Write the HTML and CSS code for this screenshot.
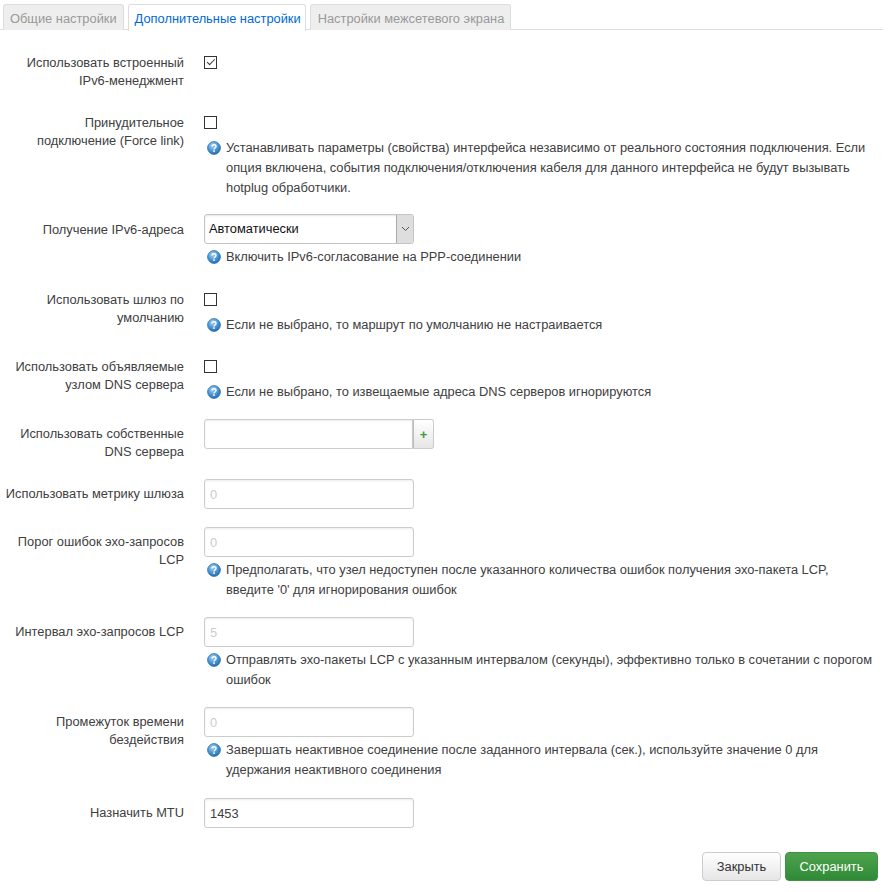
FILE: index.html
```html
<!DOCTYPE html>
<html lang="ru">
<head>
    <meta charset="UTF-8">
    <meta name="viewport" content="width=device-width, initial-scale=1.0">
    <title>Дополнительные настройки</title>
    <link rel="stylesheet" href="styles.css">
</head>
<body>

    <ul class="tabs">
        <li class="tab">Общие настройки</li>
        <li class="tab active">Дополнительные настройки</li>
        <li class="tab wide">Настройки межсетевого экрана</li>
    </ul>

    <svg width="0" height="0" class="defs">
        <defs>
            <radialGradient id="help-fill" cx="40%" cy="30%" r="75%">
                <stop offset="0" stop-color="#a9d4f2"/>
                <stop offset="0.55" stop-color="#4a96d6"/>
                <stop offset="1" stop-color="#1f69ad"/>
            </radialGradient>
            <symbol id="help" viewBox="0 0 14 14">
                <circle cx="7" cy="7" r="6.4" fill="url(#help-fill)" stroke="#2a6ea8" stroke-width="0.8"/>
                <path d="M5 5.6C5 4.4 5.9 3.8 7 3.8s2 .7 2 1.7c0 1.5-2 1.5-2 3" fill="none" stroke="#fff" stroke-width="1.4"/>
                <rect x="6.2" y="9.3" width="1.6" height="1.6" fill="#fff"/>
            </symbol>
        </defs>
    </svg>

    <div class="form">
        <div class="row">
            <label class="title low">Использовать встроенный IPv6-менеджмент</label>
            <div class="field">
                <div class="check-line"><span class="check checked"></span></div>
            </div>
        </div>

        <div class="row tight">
            <label class="title low">Принудительное подключение (Force link)</label>
            <div class="field">
                <div class="check-line"><span class="check"></span></div>
                <div class="help flush"><svg class="help-icon"><use href="#help"/></svg><span>Устанавливать параметры (свойства) интерфейса независимо от реального состояния подключения. Если опция включена, события подключения/отключения кабеля для данного интерфейса не будут вызывать hotplug обработчики.</span></div>
            </div>
        </div>

        <div class="row">
            <label class="title low">Получение IPv6-адреса</label>
            <div class="field">
                <div class="select">
                    <span class="select-value">Автоматически</span>
                    <span class="select-arrow"><svg width="9" height="6" viewBox="0 0 9 6"><path d="M1 1l3.5 3.5L8 1" fill="none" stroke="#555" stroke-width="1"/></svg></span>
                </div>
                <div class="help"><svg class="help-icon"><use href="#help"/></svg><span>Включить IPv6-согласование на PPP-соединении</span></div>
            </div>
        </div>

        <div class="row tight">
            <label class="title low">Использовать шлюз по умолчанию</label>
            <div class="field">
                <div class="check-line"><span class="check"></span></div>
                <div class="help flush"><svg class="help-icon"><use href="#help"/></svg><span>Если не выбрано, то маршрут по умолчанию не настраивается</span></div>
            </div>
        </div>

        <div class="row">
            <label class="title low">Использовать объявляемые узлом DNS сервера</label>
            <div class="field">
                <div class="check-line"><span class="check"></span></div>
                <div class="help flush"><svg class="help-icon"><use href="#help"/></svg><span>Если не выбрано, то извещаемые адреса DNS серверов игнорируются</span></div>
            </div>
        </div>

        <div class="row">
            <label class="title">Использовать собственные DNS сервера</label>
            <div class="field">
                <div class="input-group">
                    <input class="input joined" type="text">
                    <button class="add" type="button">+</button>
                </div>
            </div>
        </div>

        <div class="row">
            <label class="title">Использовать метрику шлюза</label>
            <div class="field">
                <input class="input" type="text" placeholder="0">
            </div>
        </div>

        <div class="row">
            <label class="title">Порог ошибок эхо-запросов LCP</label>
            <div class="field">
                <input class="input" type="text" placeholder="0">
                <div class="help"><svg class="help-icon"><use href="#help"/></svg><span>Предполагать, что узел недоступен после указанного количества ошибок получения эхо-пакета LCP, введите '0' для игнорирования ошибок</span></div>
            </div>
        </div>

        <div class="row">
            <label class="title">Интервал эхо-запросов LCP</label>
            <div class="field">
                <input class="input" type="text" placeholder="5">
                <div class="help"><svg class="help-icon"><use href="#help"/></svg><span>Отправлять эхо-пакеты LCP с указанным интервалом (секунды), эффективно только в сочетании с порогом ошибок</span></div>
            </div>
        </div>

        <div class="row">
            <label class="title">Промежуток времени бездействия</label>
            <div class="field">
                <input class="input" type="text" placeholder="0">
                <div class="help"><svg class="help-icon"><use href="#help"/></svg><span>Завершать неактивное соединение после заданного интервала (сек.), используйте значение 0 для удержания неактивного соединения</span></div>
            </div>
        </div>

        <div class="row last">
            <label class="title">Назначить MTU</label>
            <div class="field">
                <input class="input" type="text" value="1453">
            </div>
        </div>
    </div>

    <div class="actions">
        <button class="btn" type="button">Закрыть</button>
        <button class="btn primary" type="button">Сохранить</button>
    </div>

</body>
</html>
```

FILE: styles.css
```css
body {
    margin: 0;
    font-family: "Liberation Sans", Arial, sans-serif;
    font-size: 12.85px;
    line-height: 18px;
    color: #404040;
    background-color: #fff;
}

.defs {
    position: absolute;
}

.tabs {
    display: flex;
    gap: 4px;
    height: 25px;
    margin: 0;
    padding: 4px 7px 0 3px;
    width: 873px;
    box-sizing: content-box;
    list-style: none;
    border-bottom: 1px solid #ddd;
}

.tab {
    height: 25px;
    padding: 0 6px;
    line-height: 27px;
    color: #999;
    background-color: #eee;
    border: 1px solid #ddd;
    border-bottom: none;
    border-radius: 3px 3px 0 0;
}

.tab.active {
    height: 26px;
    padding-right: 4px;
    color: #0069d6;
    background-color: #fff;
}

.tab.wide {
    padding: 0 6px 0 7px;
}

.form {
    display: flex;
    flex-direction: column;
    gap: 18px;
    padding-top: 17px;
}

.row {
    display: flex;
    gap: 20px;
}

.row.tight {
    margin-bottom: -1px;
}

.row.last {
    margin-top: 1px;
}

.title {
    flex: none;
    box-sizing: border-box;
    width: 184px;
    padding: 6px 0 0 3px;
    text-align: right;
}

.title.low {
    padding-top: 7px;
    margin-bottom: -1px;
}

.field {
    flex: none;
    width: 674px;
}

.check-line {
    display: flex;
    align-items: center;
    height: 30px;
}

.check {
    display: flex;
    align-items: center;
    justify-content: center;
    box-sizing: border-box;
    width: 13px;
    height: 13px;
    border: 1px solid #333;
}

.check.checked::after {
    content: "";
    width: 7px;
    height: 3px;
    margin-top: -3px;
    border-left: 1px solid #333;
    border-bottom: 1px solid #333;
    transform: rotate(-45deg);
}

.help {
    display: flex;
    margin: 3px 0 -1px;
    line-height: 20px;
    color: #404040;
}

.help.flush {
    margin-top: 1px;
}

.help-icon {
    flex: none;
    width: 14px;
    height: 14px;
    margin: 3px 5px 0 3px;
}

.select {
    display: flex;
    box-sizing: border-box;
    width: 210px;
    height: 30px;
    background-color: #fff;
    border: 1px solid #c4c4c4;
    border-radius: 3px;
    box-shadow: inset 0 1px 2px rgba(0, 0, 0, 0.1);
}

.select-value {
    flex: 1;
    padding-left: 4px;
    line-height: 28px;
    color: #111;
}

.select-arrow {
    display: flex;
    align-items: center;
    justify-content: center;
    width: 16px;
    background-color: #dedede;
    border-left: 1px solid #aaa;
    border-radius: 0 2px 2px 0;
}

.input {
    display: block;
    box-sizing: border-box;
    width: 210px;
    height: 30px;
    padding: 0 5px;
    font: inherit;
    color: #404040;
    background-color: #fff;
    border: 1px solid #ccc;
    border-radius: 3px;
    box-shadow: inset 0 1px 2px rgba(0, 0, 0, 0.08);
}

.input::placeholder {
    color: #ccc;
}

.input-group {
    display: flex;
}

.input.joined {
    width: 209px;
    border-radius: 3px 0 0 3px;
}

.add {
    box-sizing: border-box;
    width: 21px;
    height: 30px;
    padding: 0;
    font: bold 13px "Liberation Sans", Arial, sans-serif;
    color: #3c9a3c;
    background: linear-gradient(#fff, #e6e6e6);
    border: 1px solid #ccc;
    border-left-color: #bbb;
    border-radius: 0 3px 3px 0;
}

.actions {
    display: flex;
    justify-content: flex-end;
    gap: 4px;
    margin-top: 24px;
    padding-right: 12px;
}

.btn {
    box-sizing: border-box;
    width: 79px;
    height: 29px;
    padding: 0;
    font: inherit;
    color: #333;
    background: linear-gradient(#fff, #e6e6e6);
    border: 1px solid #ccc;
    border-radius: 4px;
}

.btn.primary {
    width: 93px;
    color: #fff;
    background: linear-gradient(#4fa34f, #2f8a35);
    border-color: #3c9340;
}
```
